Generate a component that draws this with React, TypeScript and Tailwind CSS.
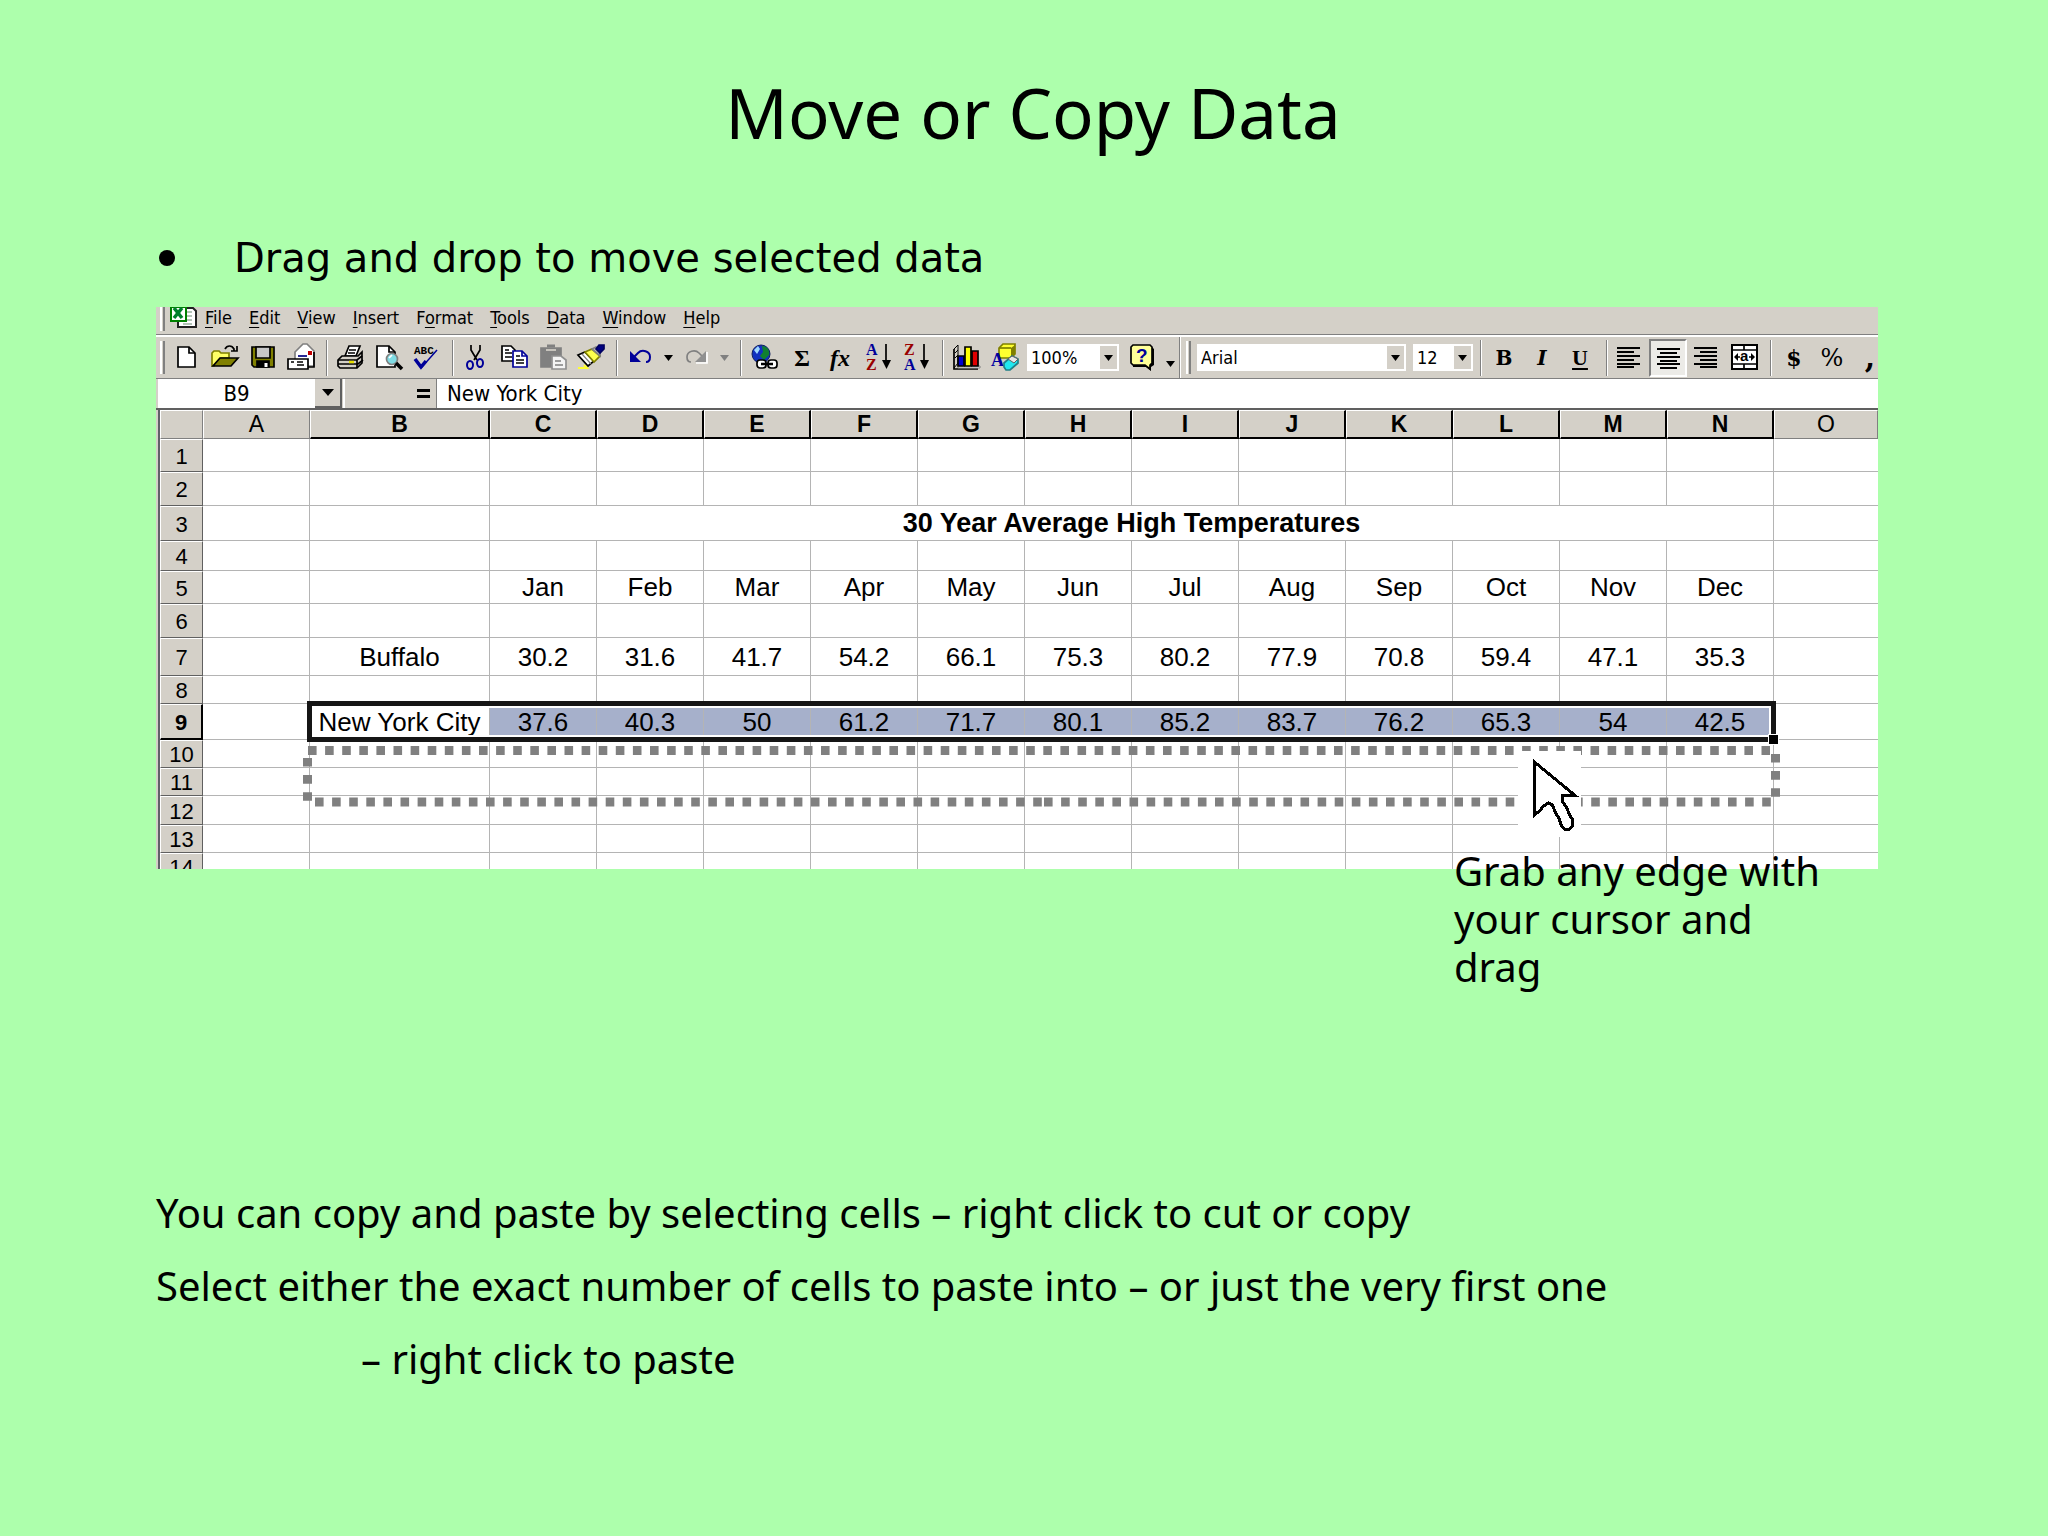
import type { ReactNode } from 'react'
import clsx from 'clsx'

const menuItems = ['File', 'Edit', 'View', 'Insert', 'Format', 'Tools', 'Data', 'Window', 'Help']

const columns = ['A', 'B', 'C', 'D', 'E', 'F', 'G', 'H', 'I', 'J', 'K', 'L', 'M', 'N', 'O']

interface SheetRow {
  height: string
  cells?: string[]
  title?: string
}

const rows: SheetRow[] = [
  { height: 'h-[33px]' },
  { height: 'h-[34px]' },
  { height: 'h-[35px]', title: '30 Year Average High Temperatures' },
  { height: 'h-[30px]' },
  {
    height: 'h-[33px]',
    cells: ['', '', 'Jan', 'Feb', 'Mar', 'Apr', 'May', 'Jun', 'Jul', 'Aug', 'Sep', 'Oct', 'Nov', 'Dec', ''],
  },
  { height: 'h-[34px]' },
  {
    height: 'h-[38px]',
    cells: ['', 'Buffalo', '30.2', '31.6', '41.7', '54.2', '66.1', '75.3', '80.2', '77.9', '70.8', '59.4', '47.1', '35.3', ''],
  },
  { height: 'h-[28px]' },
  {
    height: 'h-[36px]',
    cells: ['', 'New York City', '37.6', '40.3', '50', '61.2', '71.7', '80.1', '85.2', '83.7', '76.2', '65.3', '54', '42.5', ''],
  },
  { height: 'h-[28px]' },
  { height: 'h-[28px]' },
  { height: 'h-[29px]' },
  { height: 'h-[28px]' },
  { height: 'h-[16px]' },
]

function Icon({ children }: { children: ReactNode }) {
  return (
    <svg viewBox="0 0 27 27" className="w-[27px] h-[27px] overflow-visible" fill="none" stroke="#000" strokeWidth="1.7" aria-hidden="true">
      {children}
    </svg>
  )
}

function ToolButton({ label, children, pressed }: { label: string; children: ReactNode; pressed?: boolean }) {
  return (
    <button
      type="button"
      aria-label={label}
      className={clsx(
        'flex h-[38px] w-[38px] shrink-0 items-center justify-center',
        pressed && 'border-2 border-t-[#808080] border-l-[#808080] border-r-white border-b-white bg-[#ecebe7]',
      )}
    >
      {children}
    </button>
  )
}

function Separator() {
  return <div className="ml-[7px] mr-[3px] h-[36px] w-[2px] shrink-0 border-l border-l-[#808080] border-r border-r-white" />
}

function Handle() {
  return <div className="h-[33px] w-[5px] shrink-0 border-l-2 border-l-white border-r-2 border-r-[#808080] bg-[#d4d0c8]" />
}

function Triangle({ gray }: { gray?: boolean }) {
  return (
    <svg viewBox="0 0 9 6" className="h-[6px] w-[9px]" aria-hidden="true">
      <path d="M0 0h9L4.500 6z" fill={gray ? '#808080' : '#000'} />
    </svg>
  )
}

function ArrowButton({ label, gray, low }: { label: string; gray?: boolean; low?: boolean }) {
  return (
    <button type="button" aria-label={label} className={clsx('flex h-[38px] w-[18px] shrink-0 items-center justify-center', low && 'pt-3')}>
      <Triangle gray={gray} />
    </button>
  )
}

function ComboBox({ label, value, className }: { label: string; value: string; className: string }) {
  return (
    <div className={clsx('relative h-[27px] shrink-0 border-2 border-white bg-white', className)}>
      <select aria-label={label} defaultValue={value} className="h-full w-full appearance-none bg-white pl-[2px] text-[18px] leading-none">
        <option>{value}</option>
      </select>
      <div className="pointer-events-none absolute inset-y-0 right-0 flex w-[17px] items-center justify-center bg-[#d4d0c8]">
        <Triangle />
      </div>
    </div>
  )
}

function SortIcon({ top, bottom, topColor, bottomColor }: { top: string; bottom: string; topColor: string; bottomColor: string }) {
  return (
    <Icon>
      <g stroke="none" fontFamily="Liberation Serif, serif" fontWeight="bold" fontSize="16">
        <text x="1" y="11" fill={topColor}>{top}</text>
        <text x="1" y="26" fill={bottomColor}>{bottom}</text>
      </g>
      <path d="M21 0v18" />
      <path d="M17 16h9l-4.500 9z" fill="#000" stroke="none" />
    </Icon>
  )
}

function MenuBar() {
  return (
    <nav className="flex h-[28px] border-b border-b-[#808080] pl-1">
      <div className="-mt-[9px]">
        <Handle />
      </div>
      <svg viewBox="0 0 27 21" className="ml-[5px] h-[21px] w-[27px]" aria-hidden="true">
        <path d="M13 1h10l3 3v16H8v-5" fill="#fff" stroke="#222" strokeWidth="2" />
        <path d="M17 5h5M17 9h5M17 13h5M13 17h9" stroke="#9ab0a0" strokeWidth="1.500" />
        <path d="M1 0h15v14H1z" fill="#fff" stroke="#008000" strokeWidth="2" />
        <path d="M4 1l8 10M12 1L4 11" stroke="#00802b" strokeWidth="3.500" />
      </svg>
      <ul className="flex gap-[17px] pl-[8px]">
        {menuItems.map((item) => (
          <li key={item}>
            <button type="button" className="text-[18px] leading-[20px]">
              {item === 'Format' ? (
                <>F<u className="underline-offset-[3px]">o</u>rmat</>
              ) : (
                <><u className="underline-offset-[3px]">{item[0]}</u>{item.slice(1)}</>
              )}
            </button>
          </li>
        ))}
      </ul>
    </nav>
  )
}

function Toolbar() {
  return (
    <div className="flex h-[44px] items-center overflow-hidden border-t-2 border-t-white border-b border-b-[#808080] pl-1">
      <Handle />
      <div className="w-[2px] shrink-0" />
      <ToolButton label="New">
        <Icon><path d="M5 3h11l6 6v14H5z" fill="#fff" /><path d="M16 3v6h6" /></Icon>
      </ToolButton>
      <ToolButton label="Open">
        <Icon>
          <path d="M1 22V9l2-2h5l2 2h8v5h-8L3 22z" fill="#ffff66" stroke="#808000" />
          <path d="M9 14h18l-7 8H2z" fill="#808000" />
          <path d="M14 5c2-4 7-4 9 0v2M20 7h6V2" />
        </Icon>
      </ToolButton>
      <ToolButton label="Save">
        <Icon>
          <path d="M3 3h22v20H5l-2-2z" fill="#808000" />
          <path d="M7 3h14v11H7z" fill="#c8c8c8" />
          <path d="M8 17h12v6H8z" fill="#000" />
          <path d="M17 19v4" stroke="#fff" strokeWidth="3" />
        </Icon>
      </ToolButton>
      <ToolButton label="E-mail">
        <Icon>
          <path d="M8 22V8l8-8h4l7 7v15z" fill="#fff" stroke="#808080" />
          <path d="M27 8v15H18" />
          <path d="M11 12h9" stroke="#000080" />
          <path d="M21 7h4v4h-4z" fill="#c00000" stroke="none" />
          <path d="M1 15h20v10H1z" fill="#fff" />
          <path d="M4 18h3M10 18h6M10 21h7" />
        </Icon>
      </ToolButton>
      <Separator />
      <ToolButton label="Print">
        <Icon>
          <path d="M8 12l4-10h11l-4 10z" fill="#fff" />
          <path d="M12 6h7M11 9h7" strokeWidth="1.300" />
          <path d="M5 12h16l4-4v11l-5 5H3l-2-2v-6z" fill="#d4d0c8" />
          <path d="M1 16h19l5-4M1 20h20l5-4M20 16v8" />
          <path d="M12 18h5" stroke="#e8e000" strokeWidth="2.500" />
        </Icon>
      </ToolButton>
      <ToolButton label="Print Preview">
        <Icon>
          <path d="M2 2h12l6 6v15H2z" fill="#fff" />
          <path d="M14 2v6h6" />
          <circle cx="17" cy="15" r="5.500" fill="#7fdce4" stroke="#808080" />
          <path d="M14 14l3-3" stroke="#fff" />
          <path d="M21 19l6 6" strokeWidth="3.500" />
        </Icon>
      </ToolButton>
      <ToolButton label="Spelling">
        <Icon>
          <text x="1" y="10" stroke="none" fill="#000" fontFamily="Liberation Mono, monospace" fontWeight="bold" fontSize="11">ABC</text>
          <path d="M3 17l6 6L24 6" stroke="#000099" strokeWidth="1.500" />
          <path d="M2 15l6 8 5-6" stroke="#000099" strokeWidth="3.500" />
        </Icon>
      </ToolButton>
      <Separator />
      <ToolButton label="Cut">
        <Icon>
          <path d="M8 1v5l6 10M17 1v5l-6 10" />
          <ellipse cx="7" cy="21" rx="3" ry="4" stroke="#000099" strokeWidth="2" />
          <ellipse cx="17" cy="19" rx="3" ry="4" stroke="#000099" strokeWidth="2" />
        </Icon>
      </ToolButton>
      <ToolButton label="Copy">
        <Icon>
          <path d="M1 2h9l4 4v11H1z" fill="#fff" />
          <path d="M4 6h4M4 9h7M4 13h7" />
          <path d="M12 7h9l5 5v11H12z" fill="#fff" stroke="#000099" />
          <path d="M21 7v5h5" stroke="#000099" />
          <path d="M15 12h4M15 16h8M15 19h8" />
        </Icon>
      </ToolButton>
      <ToolButton label="Paste">
        <Icon>
          <path d="M2 4h20v19H2z" fill="#808080" stroke="#808080" />
          <path d="M8 2h8" stroke="#808080" strokeWidth="3" />
          <path d="M7 6h10" stroke="#d4d0c8" />
          <path d="M13 12h9l5 4v9H13z" fill="#f4f4f4" stroke="#909090" />
          <path d="M16 17h6M16 21h8" stroke="#808080" />
        </Icon>
      </ToolButton>
      <ToolButton label="Format Painter">
        <Icon>
          <path d="M1 11l7-3 9 9-6 5z" fill="#fff" />
          <path d="M5 10l9 10M9 8l8 8" stroke="#808080" strokeWidth="1.200" />
          <path d="M8 8l7-3 8 7-6 6z" fill="#ffff4d" stroke="#808000" />
          <path d="M15 5l4-2 4 4v5z" fill="#c0c0c0" stroke="#808080" />
          <path d="M19 5l3-4h5v4l-4 4z" fill="#000080" stroke="#000060" />
          <path d="M1 24h9l-3-3" stroke="#ffff33" strokeWidth="2" />
        </Icon>
      </ToolButton>
      <Separator />
      <ToolButton label="Undo">
        <Icon>
          <path d="M7 13l4-4c4-4 12-2 12 4 0 3-1 5-4 5" stroke="#000099" strokeWidth="2" />
          <path d="M3 7v11h11z" fill="#000099" stroke="none" />
        </Icon>
      </ToolButton>
      <ArrowButton label="Undo list" />
      <ToolButton label="Redo">
        <Icon>
          <path d="M20 13l-4-4C12 5 4 7 4 13c0 3 1 5 4 5" stroke="#808080" strokeWidth="1.700" />
          <path d="M24 8v11H13" stroke="#fff" />
          <path d="M23 7v11H12z" fill="#909090" stroke="none" />
        </Icon>
      </ToolButton>
      <ArrowButton label="Redo list" gray />
      <Separator />
      <ToolButton label="Insert Hyperlink">
        <Icon>
          <circle cx="10" cy="10" r="9" fill="#1030c0" stroke="#102060" strokeWidth="1" />
          <path d="M11 2c5 0 8 4 7 9l-5 5-4-4 3-4z" fill="#108030" stroke="none" />
          <path d="M3 6l4-4 2 3-3 5z" fill="#9fd8ff" stroke="none" />
          <rect x="6" y="16" width="9" height="8" rx="3" fill="#fff" />
          <rect x="17" y="16" width="9" height="8" rx="3" fill="#fff" />
          <path d="M10 20h12" strokeWidth="2.500" />
        </Icon>
      </ToolButton>
      <ToolButton label="AutoSum">
        <span className="font-['Liberation_Serif',serif] text-[24px] leading-none font-bold">Σ</span>
      </ToolButton>
      <ToolButton label="Paste Function">
        <span className="font-['Liberation_Serif',serif] text-[24px] leading-none font-bold italic">fx</span>
      </ToolButton>
      <ToolButton label="Sort Ascending">
        <SortIcon top="A" bottom="Z" topColor="#000099" bottomColor="#990000" />
      </ToolButton>
      <ToolButton label="Sort Descending">
        <SortIcon top="Z" bottom="A" topColor="#990000" bottomColor="#000099" />
      </ToolButton>
      <Separator />
      <ToolButton label="Chart Wizard">
        <Icon>
          <path d="M1 5v20h24" />
          <path d="M1 5l4-4v18l-4 5M2 9l3-3M2 14l3-3" strokeWidth="1" />
          <path d="M5 22h22v2H5z" fill="#fff" stroke="#808080" strokeWidth="1" />
          <path d="M5 12h6v10H5z" fill="#0000d0" />
          <path d="M12 3h6v19h-6z" fill="#ffff00" />
          <path d="M19 7h6v15h-6z" fill="#e00000" />
        </Icon>
      </ToolButton>
      <ToolButton label="Drawing">
        <Icon>
          <path d="M8 4l4-4h12v10l-4 4H8z" fill="#ffff30" stroke="#808000" />
          <path d="M20 4v9l4-3V1z" fill="#808000" stroke="none" />
          <path d="M8 4h12" stroke="#808000" />
          <text x="0" y="22" stroke="none" fill="#0000a0" fontFamily="Liberation Serif, serif" fontWeight="bold" fontSize="18">A</text>
          <path d="M13 19l8-7 6 3v4l-8 7h-4l-2-3z" fill="#20e8f0" stroke="#208088" />
          <path d="M17 15l4-3 6 3-4 4z" fill="#e8e8e8" stroke="#606060" strokeWidth="1" />
        </Icon>
      </ToolButton>
      <div className="w-1 shrink-0" />
      <ComboBox label="Zoom" value="100%" className="w-[92px]" />
      <div className="w-1 shrink-0" />
      <ToolButton label="Help">
        <Icon>
          <path d="M4 2h18l3 3v16l-3 2v4l-5-4H4z" fill="#000" stroke="none" />
          <path d="M4 1h17l2 2v16l-2 2v4l-5-4H4l-2-2V3z" fill="#ffff99" />
          <text x="7" y="18" stroke="none" fill="#000099" fontFamily="Liberation Sans, sans-serif" fontWeight="bold" fontSize="19">?</text>
        </Icon>
      </ToolButton>
      <ArrowButton label="More buttons" low />
      <div className="mr-[5px] h-full w-[2px] shrink-0 border-l border-l-[#808080] border-r border-r-white" />
      <Handle />
      <div className="w-[6px] shrink-0" />
      <ComboBox label="Font" value="Arial" className="w-[209px]" />
      <div className="w-[7px] shrink-0" />
      <ComboBox label="Font size" value="12" className="w-[60px]" />
      <Separator />
      <ToolButton label="Bold">
        <span className="font-['DejaVu_Serif',serif] text-[20px] leading-none font-bold">B</span>
      </ToolButton>
      <ToolButton label="Italic">
        <span className="font-['DejaVu_Serif',serif] text-[20px] leading-none font-bold italic">I</span>
      </ToolButton>
      <ToolButton label="Underline">
        <span className="font-['Liberation_Serif',serif] text-[22px] leading-none font-bold underline underline-offset-[3px]">U</span>
      </ToolButton>
      <Separator />
      <ToolButton label="Align Left">
        <Icon><path d="M0 4h23M0 8h17M0 12h23M0 16h17M0 20h23M0 23h17" shapeRendering="crispEdges" strokeWidth="2" /></Icon>
      </ToolButton>
      <ToolButton label="Center" pressed>
        <Icon><path d="M2 5h23M5 9h17M2 13h23M5 17h17M2 20h23M5 24h17" shapeRendering="crispEdges" strokeWidth="2" /></Icon>
      </ToolButton>
      <ToolButton label="Align Right">
        <Icon><path d="M1 4h23M7 8h17M1 12h23M7 16h17M1 20h23M7 23h17" shapeRendering="crispEdges" strokeWidth="2" /></Icon>
      </ToolButton>
      <ToolButton label="Merge and Center">
        <Icon>
          <path d="M1 1h25v24H1z" fill="#fff" strokeWidth="2" />
          <path d="M1 6h25M1 20h25M13 1v5M13 20v5" />
          <path d="M3 13l4-4v8zM24 13l-4-4v8z" fill="#000" stroke="none" />
          <path d="M6 13h3M18 13h3" />
          <text x="9" y="17" stroke="none" fill="#000" fontFamily="Liberation Sans, sans-serif" fontWeight="bold" fontSize="15">a</text>
        </Icon>
      </ToolButton>
      <Separator />
      <ToolButton label="Currency Style">
        <span className="font-['DejaVu_Serif',serif] text-[22px] leading-none font-bold">$</span>
      </ToolButton>
      <ToolButton label="Percent Style">
        <span className="font-['DejaVu_Serif',serif] text-[24px] leading-none">%</span>
      </ToolButton>
      <ToolButton label="Comma Style">
        <span className="font-['DejaVu_Serif',serif] text-[30px] leading-none font-bold">,</span>
      </ToolButton>
    </div>
  )
}

function FormulaBar() {
  return (
    <div className="flex h-[31px] border-b-2 border-b-[#606060]">
      <input aria-label="Name box" defaultValue="B9" className="ml-[2px] w-[157px] bg-white text-center text-[22px] leading-none" />
      <button
        type="button"
        aria-label="Open name list"
        className="flex w-[27px] items-center justify-center border-r-2 border-b-2 border-[#606060] bg-[#d4d0c8]"
      >
        <svg viewBox="0 0 12 7" className="h-[7px] w-[12px]" aria-hidden="true"><path d="M0 0h12L6 7z" /></svg>
      </button>
      <div className="ml-[1px] w-[2px] bg-white" />
      <button type="button" aria-label="Edit formula" className="flex w-[92px] items-center justify-end border-r border-r-[#808080] pr-[6px]">
        <svg viewBox="0 0 13 10" className="h-[10px] w-[13px]" aria-hidden="true"><path d="M0 0h13v3H0zM0 6h13v3H0z" /></svg>
      </button>
      <input aria-label="Formula" defaultValue="New York City" className="min-w-0 flex-1 bg-white pl-[10px] text-[22px] leading-none" />
    </div>
  )
}

function SheetCell({ text, selected, last }: { text: string; selected?: boolean; last?: boolean }) {
  return (
    <td
      className={clsx(
        'border-r border-[#b4b4b4] p-0 text-center text-[26px] leading-none whitespace-nowrap last:border-r-0',
        !last && 'border-b',
        selected ? 'bg-[#a6b0cb]' : 'bg-white',
      )}
    >
      {text}
    </td>
  )
}

function Sheet() {
  return (
    <div className="relative ml-[2px] border-l-2 border-l-[#606068] font-['Liberation_Sans',Arial,sans-serif]">
      <table className="w-full table-fixed border-separate border-spacing-0">
        <colgroup>
          <col className="w-[43px]" />
          {columns.map((c) => (
            <col key={c} className={c === 'B' ? 'w-[180px]' : c === 'O' ? '' : 'w-[107px]'} />
          ))}
        </colgroup>
        <thead>
          <tr className="h-[29px]">
            <td className="border-t border-l border-t-white border-l-white border-r border-b border-r-[#808080] border-b-[#808080] bg-[#d4d0c8] p-0" />
            {columns.map((c) => {
              const active = c !== 'A' && c !== 'O'
              return (
                <th
                  key={c}
                  scope="col"
                  className={clsx(
                    'border-t border-l border-t-white border-l-white bg-[#d4d0c8] p-0 text-[23px] leading-none',
                    active ? 'border-r-2 border-b-2 border-r-black border-b-black font-bold' : 'border-r border-b border-r-[#808080] border-b-[#808080] font-normal',
                  )}
                >
                  {c}
                </th>
              )
            })}
          </tr>
        </thead>
        <tbody>
          {rows.map((row, i) => {
            const n = i + 1
            const last = n === rows.length
            const cells = row.cells ?? columns.map(() => '')
            return (
              <tr key={n} className={row.height}>
                <th
                  scope="row"
                  className={clsx(
                    'border-t border-l border-t-white border-l-white bg-[#d4d0c8] p-0 text-[22px] leading-none',
                    n === 9 ? 'border-r-2 border-b-2 border-r-black border-b-black font-bold' : 'border-r border-r-[#606060] border-b-[#606060] font-normal',
                    n !== 9 && !last && 'border-b',
                    !last && 'pt-[2px]',
                  )}
                >
                  {last ? <div className="h-[14px] overflow-hidden leading-[26px]">{n}</div> : n}
                </th>
                {row.title ? (
                  <>
                    <SheetCell text="" />
                    <SheetCell text="" />
                    <td colSpan={12} className="border-r border-b border-[#b4b4b4] bg-white p-0 text-center text-[27px] leading-none font-bold">
                      {row.title}
                    </td>
                    <SheetCell text="" />
                  </>
                ) : (
                  cells.map((text, j) => <SheetCell key={columns[j]} text={text} selected={n === 9 && j > 1 && j < 14} last={last} />)
                )}
              </tr>
            )
          })}
        </tbody>
      </table>

      {/* selection frame around B9:N9 with its fill handle */}
      <div className="pointer-events-none absolute top-[291px] left-[147px] h-[41px] w-[1469px] border-[5px] border-[#151515]">
        <div className="h-full w-full border-2 border-white" />
        <div className="absolute -right-[8px] -bottom-[8px] h-[11px] w-[11px] border border-white bg-black" />
      </div>

      {/* drop outline and mouse pointer */}
      <svg viewBox="0 0 1480 100" className="pointer-events-none absolute top-[335px] left-[143px] h-[100px] w-[1480px]" fill="none" aria-hidden="true">
        <g stroke="#808080" strokeWidth="9" strokeDasharray="8.600 8.500">
          <path d="M5 5.500h1462M12 57h727M741 57h728" />
          <path d="M4.500 13v44M1472.500 9v44" />
        </g>
        <path d="M1215 6h63v86h-63z" fill="#fff" />
        <path d="M1231.500 17v53l5-4 4-5 5-3 4 2 3 8 3 4 3 9 3 3h5l3-3v-7l-3-4-3-8-4-5v-7h12z" fill="#fff" stroke="#000" strokeWidth="3" shapeRendering="crispEdges" />
      </svg>
    </div>
  )
}

export default function App() {
  return (
    <main className="min-h-screen bg-[#adffac] pt-[66px] pr-[170px] pl-[156px] font-['Noto_Sans',sans-serif] text-black">
      <h1 className="pl-8 text-center text-[69px] leading-[92px]">Move or Copy Data</h1>

      <ul className="mt-[76px] font-['DejaVu_Sans',Verdana,sans-serif] text-[40px] leading-[48px]">
        <li className="flex items-center gap-[59px]">
          <span className="ml-[3px] h-[16px] w-[16px] rounded-full bg-black" />
          Drag and drop to move selected data
        </li>
      </ul>

      <section className="mt-[25px] overflow-hidden bg-[#d4d0c8] font-['DejaVu_Sans_Condensed','Noto_Sans',sans-serif]">
        <MenuBar />
        <Toolbar />
        <FormulaBar />
        <Sheet />
      </section>

      <p className="relative mr-[44px] -mt-[22px] ml-auto w-[380px] text-[40px] leading-[48px]">
        Grab any edge with your cursor and drag
      </p>

      <div className="mt-[185px] text-[40px] leading-[73px]">
        <p>You can copy and paste by selecting cells – right click to cut or copy</p>
        <p>Select either the exact number of cells to paste into – or just the very first one</p>
        <p className="pl-[205px]">– right click to paste</p>
      </div>
    </main>
  )
}
